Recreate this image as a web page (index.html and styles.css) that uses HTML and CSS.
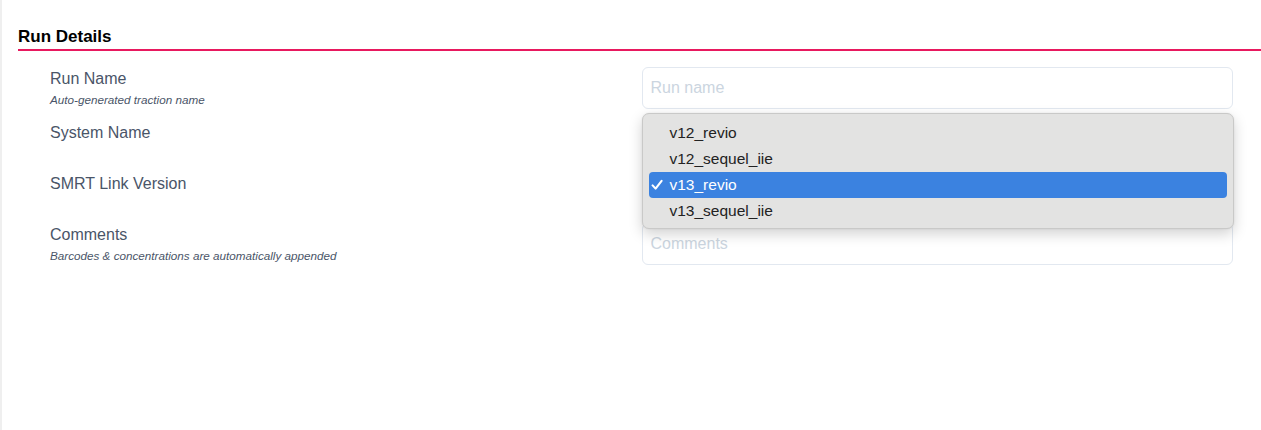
FILE: index.html
```html
<!DOCTYPE html>
<html lang="en">
<head>
<meta charset="utf-8">
<title>Run Details</title>
<link rel="stylesheet" href="styles.css">
</head>
<body>
<div class="page">
  <section class="panel">
    <h2 class="panel-title">Run Details</h2>
    <div class="form">
      <div class="row">
        <div class="label-col">
          <div class="label">Run Name</div>
          <div class="hint">Auto-generated traction name</div>
        </div>
        <div class="field-col">
          <input class="input input-tall" type="text" placeholder="Run name">
        </div>
      </div>
      <div class="row">
        <div class="label-col">
          <div class="label">System Name</div>
        </div>
        <div class="field-col">
          <div class="select"></div>
        </div>
      </div>
      <div class="row">
        <div class="label-col">
          <div class="label">SMRT Link Version</div>
        </div>
        <div class="field-col field-rel">
          <div class="select"></div>
          <ul class="popup">
            <li class="option">v12_revio</li>
            <li class="option">v12_sequel_iie</li>
            <li class="option option-selected"><svg class="check" width="12" height="12" viewBox="0 0 12 12" aria-hidden="true"><path d="M1.6 6.4 L4.6 9.6 L10.6 1.8" fill="none" stroke="#ffffff" stroke-width="2.1" stroke-linecap="round" stroke-linejoin="round"/></svg>v13_revio</li>
            <li class="option">v13_sequel_iie</li>
          </ul>
        </div>
      </div>
      <div class="row">
        <div class="label-col">
          <div class="label">Comments</div>
          <div class="hint">Barcodes &amp; concentrations are automatically appended</div>
        </div>
        <div class="field-col">
          <input class="input input-tall" type="text" placeholder="Comments">
        </div>
      </div>
    </div>
  </section>
</div>
</body>
</html>
```

FILE: styles.css
```css
html, body {
  margin: 0;
  padding: 0;
  background: #ffffff;
}

body {
  font-family: "Liberation Sans", Arial, Helvetica, sans-serif;
}

.page {
  min-height: 430px;
  border-left: 2px solid #efefef;
  padding-left: 16px;
  box-sizing: border-box;
}

.panel {
  padding-top: 25px;
}

.panel-title {
  margin: 0;
  font-size: 17px;
  font-weight: 700;
  line-height: 24px;
  color: #000000;
  border-bottom: 2px solid #e8195f;
}

.form {
  padding: 16px 28px 0 32px;
  display: flex;
  flex-direction: column;
  gap: 12px;
}

.row {
  display: flex;
  align-items: flex-start;
}

.label-col {
  flex: 1 1 0;
  min-width: 0;
}

.field-col {
  flex: 1 1 0;
  min-width: 0;
}

.field-rel {
  position: relative;
}

.label {
  font-size: 16px;
  line-height: 24px;
  color: #4a5568;
}

.hint {
  font-size: 11.7px;
  line-height: 18px;
  font-style: italic;
  color: #4a5568;
}

.input {
  display: block;
  width: 100%;
  box-sizing: border-box;
  border: 1px solid #e2e8f0;
  border-radius: 6px;
  padding: 0 8px;
  font-family: "Liberation Sans", Arial, Helvetica, sans-serif;
  font-size: 16px;
  color: #2d3748;
  background: #ffffff;
  outline: none;
}

.input-tall {
  height: 42px;
}

.input::placeholder {
  color: #cbd5e0;
}

.select {
  height: 39px;
  box-sizing: border-box;
  border: 1px solid #e2e8f0;
  border-radius: 6px;
  background: #ffffff;
}

.popup {
  position: absolute;
  top: -59px;
  left: 0;
  right: -1px;
  margin: 0;
  padding: 6px 6px;
  list-style: none;
  box-sizing: border-box;
  height: 116px;
  background: #e3e3e2;
  border: 1px solid #c9c9c8;
  border-radius: 7px;
  box-shadow: 0 5px 14px rgba(0, 0, 0, 0.18), 0 0 2px rgba(0, 0, 0, 0.08);
}

.option {
  position: relative;
  height: 26px;
  line-height: 26px;
  padding-left: 21px;
  font-size: 15.5px;
  color: #222222;
  border-radius: 4px;
}

.option-selected {
  background: #3b82e0;
  color: #ffffff;
}

.check {
  position: absolute;
  left: 2px;
  top: 7px;
}
```
